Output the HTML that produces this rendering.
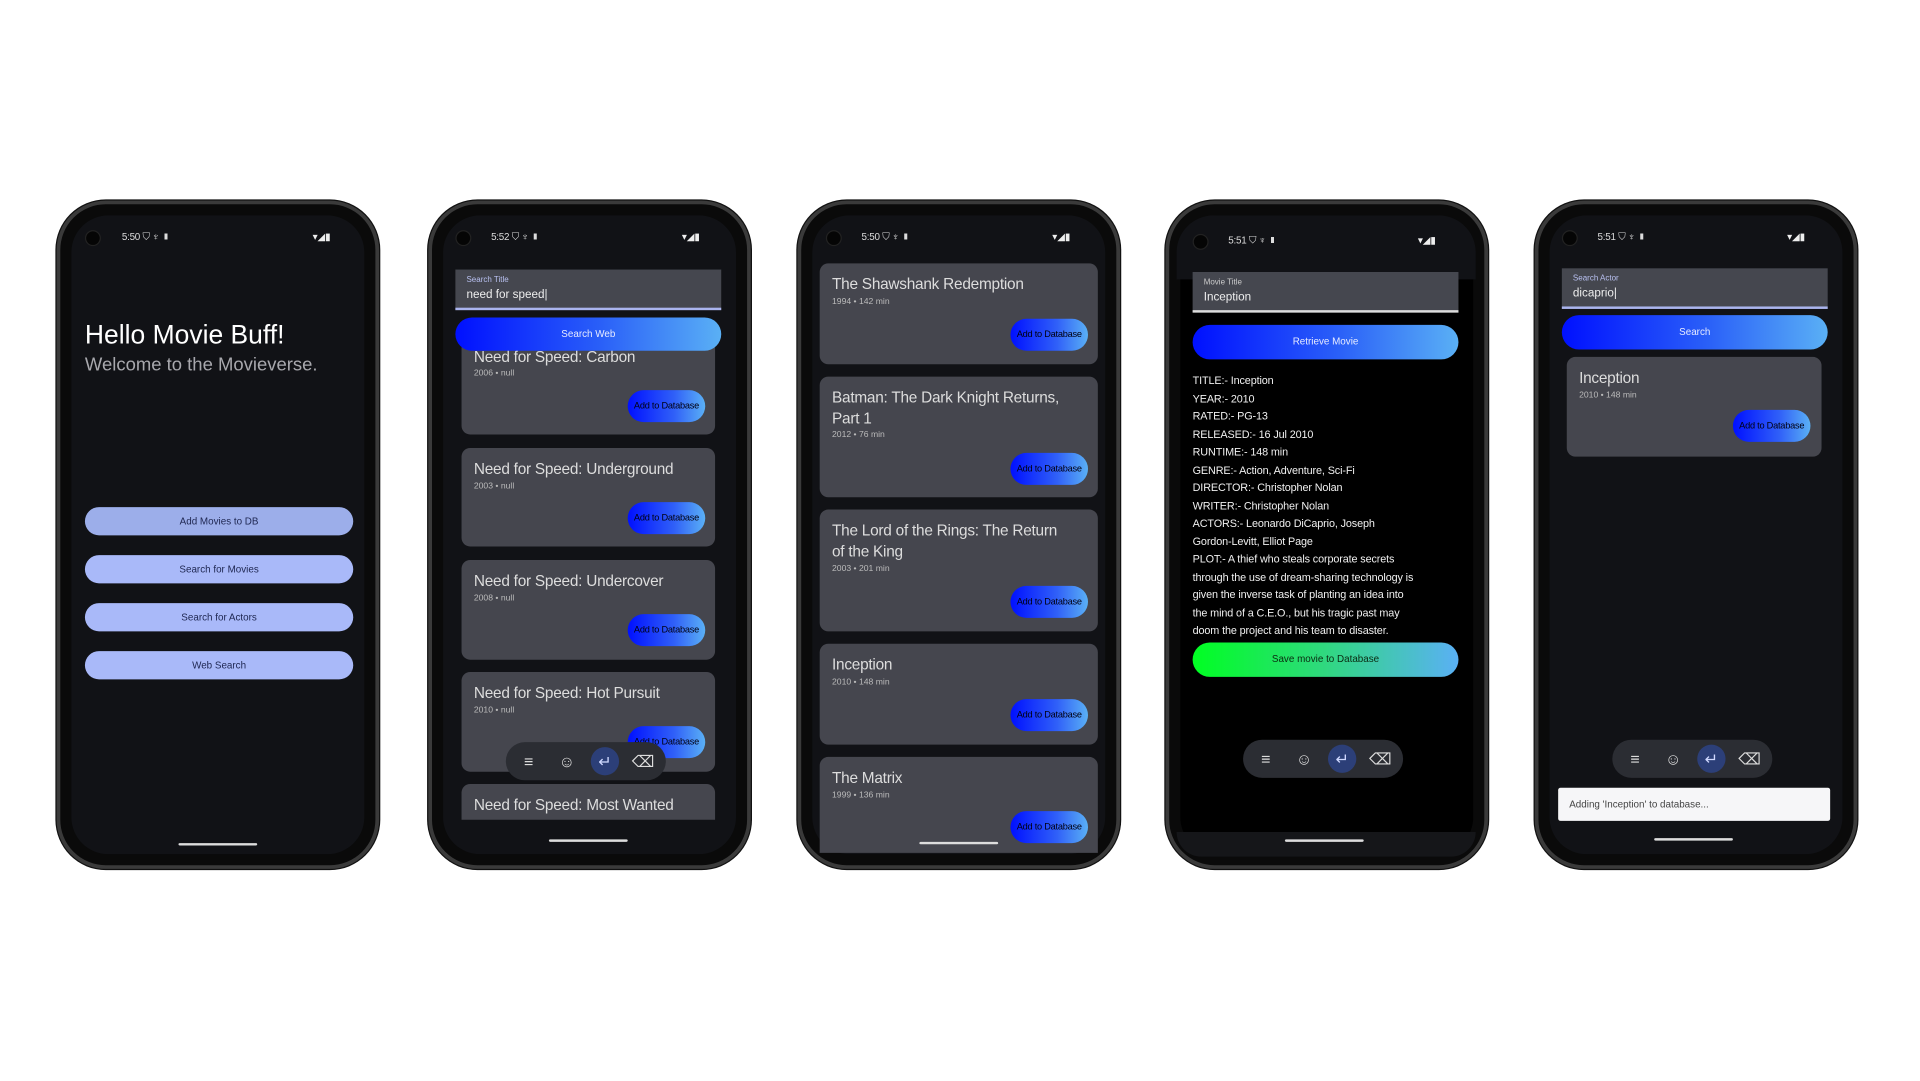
<!DOCTYPE html>
<html><head><meta charset="utf-8"><style>
html,body{margin:0;padding:0;background:#fff;width:1920px;height:1080px;overflow:hidden}
#st{position:absolute;left:0;top:0;width:1560px;height:878px;transform:scale(1.23077);transform-origin:0 0;font-family:"Liberation Sans",sans-serif}
.g{position:absolute;left:0;top:0;width:1560px;height:878px}
.a{position:absolute;white-space:nowrap}
.ph{position:absolute;top:163px;width:256px;height:537px;border-radius:40px;background:#0a0a0a;border:3px solid #3a3a3a;box-shadow:0 0 0 1px #111}
.sc{position:absolute;left:9px;top:9px;right:9px;bottom:9px;border-radius:30px;background:#111216;overflow:hidden}
.cam{position:absolute;width:11px;height:11px;border-radius:50%;background:#050505;border:1px solid #222;top:187px}
.time{position:absolute;top:188px;font-size:8px;color:#ddd;letter-spacing:-0.2px;white-space:nowrap}
.ri{position:absolute;top:188px;font-size:8px;color:#eee;white-space:nowrap}
.fld{position:absolute;width:216px;height:31px;background:#45474f;border-bottom:2px solid #aab4ee}
.fld .l{position:absolute;left:9px;top:5px;font-size:6.5px;color:#b8c0f0;white-space:nowrap}
.fld .v{position:absolute;left:9px;top:15px;font-size:9.5px;color:#eee;white-space:nowrap}
.gb{position:absolute;width:216px;height:27px;border-radius:14px;background:linear-gradient(90deg,#0010ff,#2a60f8 55%,#5ab0f5);color:#e8ecff;font-size:8px;text-align:center;line-height:27px}
.card{position:absolute;background:#45464e;border-radius:7px;overflow:hidden}
.card .t{position:absolute;left:10px;top:9px;font-size:12.5px;color:#ddd;line-height:17px;width:200px;letter-spacing:-0.2px}
.card .s{position:absolute;left:10px;font-size:7px;color:#bbb;white-space:nowrap}
.add{position:absolute;width:63px;height:26px;border-radius:13px;background:linear-gradient(90deg,#0010ff,#3060f8 60%,#5ab0f5);color:#001;font-size:7.5px;line-height:26px;text-align:center;white-space:nowrap;overflow:hidden;letter-spacing:-0.2px}
.pb{position:absolute;left:69px;width:218px;height:23px;border-radius:12px;background:#a9b9f9;color:#1e2650;font-size:8px;text-align:center;line-height:23px}
.kb{position:absolute;width:130px;height:31px;border-radius:16px;background:#2b2d33}
.kb span{position:absolute;top:4px;width:23px;height:23px;line-height:23px;text-align:center;color:#ddd;font-size:13px}
.kb .e{background:#2c3f78;border-radius:50%;color:#cfd8ff}
.hb{position:absolute;height:2px;width:64px;background:#ddd;border-radius:1px}
.info{position:absolute;left:975px;top:302px;width:218px;font-size:8.8px;line-height:14.5px;color:#f0f0f0;letter-spacing:-0.1px;white-space:nowrap}
</style></head><body><div id="st">

<!-- phones -->
<div class="ph" style="left:46px"><div class="sc"></div></div>
<div class="ph" style="left:348px"><div class="sc"></div></div>
<div class="ph" style="left:648px"><div class="sc"></div></div>
<div class="ph" style="left:947px"><div class="sc" style="background:#000"></div></div>
<div class="ph" style="left:1247px"><div class="sc"></div></div>

<!-- phone 1 -->
<div class="g">
<div class="cam" style="left:69px"></div><div class="time" style="left:99px">5:50 ⛉ ♆ ▮</div><div class="ri" style="left:254px">▾◢▮</div>
<div class="a" style="left:69px;top:260px;font-size:21.5px;color:#fff">Hello Movie Buff!</div>
<div class="a" style="left:69px;top:288px;font-size:15px;color:#a8a8ad">Welcome to the Movieverse.</div>
<div class="pb" style="top:412px;background:#9caeea">Add Movies to DB</div>
<div class="pb" style="top:451px">Search for Movies</div>
<div class="pb" style="top:490px">Search for Actors</div>
<div class="pb" style="top:529px">Web Search</div>
<div class="hb" style="left:145px;top:685px"></div>
</div>

<!-- phone 2 -->
<div class="g" style="left:-2px">
<div class="cam" style="left:372px"></div><div class="time" style="left:401px">5:52 ⛉ ♆ ▮</div><div class="ri" style="left:556px">▾◢▮</div>
<div class="card" style="left:377px;top:270px;width:206px;height:83px"><div class="t" style="top:12px">Need for Speed: Carbon</div><div class="s" style="top:30px">2006 • null</div><div class="add" style="left:135px;top:47px">Add to Database</div></div>
<div class="card" style="left:377px;top:364px;width:206px;height:80px"><div class="t">Need for Speed: Underground</div><div class="s" style="top:28px">2003 • null</div><div class="add" style="left:135px;top:44px">Add to Database</div></div>
<div class="card" style="left:377px;top:455px;width:206px;height:81px"><div class="t">Need for Speed: Undercover</div><div class="s" style="top:28px">2008 • null</div><div class="add" style="left:135px;top:44px">Add to Database</div></div>
<div class="card" style="left:377px;top:546px;width:206px;height:81px"><div class="t">Need for Speed: Hot Pursuit</div><div class="s" style="top:28px">2010 • null</div><div class="add" style="left:135px;top:44px">Add to Database</div></div>
<div class="card" style="left:377px;top:637px;width:206px;height:29px;border-radius:7px 7px 0 0"><div class="t">Need for Speed: Most Wanted</div></div>
<div class="fld" style="left:372px;top:219px"><div class="l">Search Title</div><div class="v">need for speed|</div></div>
<div class="gb" style="left:372px;top:258px">Search Web</div>
<div class="kb" style="left:413px;top:603px"><span style="left:7px">≡</span><span style="left:38px">☺</span><span class="e" style="left:69px">↵</span><span style="left:100px">⌫</span></div>
<div class="hb" style="left:448px;top:682px"></div>
</div>

<!-- phone 3 -->
<div class="g" style="left:-3px">
<div class="cam" style="left:674px"></div><div class="time" style="left:703px">5:50 ⛉ ♆ ▮</div><div class="ri" style="left:858px">▾◢▮</div>
<div class="card" style="left:669px;top:214px;width:226px;height:82px"><div class="t">The Shawshank Redemption</div><div class="s" style="top:28px">1994 • 142 min</div><div class="add" style="left:155px;top:45px">Add to Database</div></div>
<div class="card" style="left:669px;top:306px;width:226px;height:98px"><div class="t">Batman: The Dark Knight Returns,<br>Part 1</div><div class="s" style="top:44px">2012 • 76 min</div><div class="add" style="left:155px;top:62px">Add to Database</div></div>
<div class="card" style="left:669px;top:414px;width:226px;height:99px"><div class="t">The Lord of the Rings: The Return<br>of the King</div><div class="s" style="top:45px">2003 • 201 min</div><div class="add" style="left:155px;top:62px">Add to Database</div></div>
<div class="card" style="left:669px;top:523px;width:226px;height:82px"><div class="t">Inception</div><div class="s" style="top:28px">2010 • 148 min</div><div class="add" style="left:155px;top:45px">Add to Database</div></div>
<div class="card" style="left:669px;top:615px;width:226px;height:78px;border-radius:7px 7px 0 0"><div class="t">The Matrix</div><div class="s" style="top:28px">1999 • 136 min</div><div class="add" style="left:155px;top:44px">Add to Database</div></div>
<div class="hb" style="left:750px;top:684px"></div>
</div>

<!-- phone 4 -->
<div class="g" style="left:-6px">
<div class="a" style="left:962px;top:175px;width:243px;height:52px;background:#111216;border-radius:30px 30px 0 0"></div>
<div class="cam" style="left:975px;top:190px"></div><div class="time" style="left:1004px;top:191px">5:51 ⛉ ♆ ▮</div><div class="ri" style="left:1158px;top:191px">▾◢▮</div>
<div class="fld" style="left:975px;top:221px;border-bottom-color:#ddd"><div class="l" style="color:#ccc">Movie Title</div><div class="v">Inception</div></div>
<div class="gb" style="left:975px;top:264px;height:28px;line-height:28px">Retrieve Movie</div>
<div class="info">TITLE:- Inception<br>YEAR:- 2010<br>RATED:- PG-13<br>RELEASED:- 16 Jul 2010<br>RUNTIME:- 148 min<br>GENRE:- Action, Adventure, Sci-Fi<br>DIRECTOR:- Christopher Nolan<br>WRITER:- Christopher Nolan<br>ACTORS:- Leonardo DiCaprio, Joseph<br>Gordon-Levitt, Elliot Page<br>PLOT:- A thief who steals corporate secrets<br>through the use of dream-sharing technology is<br>given the inverse task of planting an idea into<br>the mind of a C.E.O., but his tragic past may<br>doom the project and his team to disaster.</div>
<div class="gb" style="left:975px;top:522px;height:28px;line-height:28px;background:linear-gradient(90deg,#00ff22,#30d880 50%,#5ab0f5);color:#0a2a10">Save movie to Database</div>
<div class="kb" style="left:1016px;top:601px"><span style="left:7px">≡</span><span style="left:38px">☺</span><span class="e" style="left:69px">↵</span><span style="left:100px">⌫</span></div>
<div class="a" style="left:962px;top:676px;width:243px;height:20px;background:#151619;border-radius:0 0 30px 30px"></div>
<div class="hb" style="left:1050px;top:682px"></div>
</div>

<!-- phone 5 -->
<div class="g" style="left:-7px">
<div class="cam" style="left:1276px"></div><div class="time" style="left:1305px">5:51 ⛉ ♆ ▮</div><div class="ri" style="left:1459px">▾◢▮</div>
<div class="fld" style="left:1276px;top:218px"><div class="l">Search Actor</div><div class="v">dicaprio|</div></div>
<div class="gb" style="left:1276px;top:256px;height:28px;line-height:28px">Search</div>
<div class="card" style="left:1280px;top:290px;width:207px;height:81px"><div class="t">Inception</div><div class="s" style="top:28px">2010 • 148 min</div><div class="add" style="left:135px;top:43px">Add to Database</div></div>
<div class="kb" style="left:1317px;top:601px"><span style="left:7px">≡</span><span style="left:38px">☺</span><span class="e" style="left:69px">↵</span><span style="left:100px">⌫</span></div>
<div class="a" style="left:1273px;top:640px;width:221px;height:27px;background:#f6f6f8;border-radius:2px;font-size:8px;color:#444;line-height:27px;text-indent:9px">Adding 'Inception' to database...</div>
<div class="hb" style="left:1351px;top:681px"></div>
</div>

</div></body></html>
